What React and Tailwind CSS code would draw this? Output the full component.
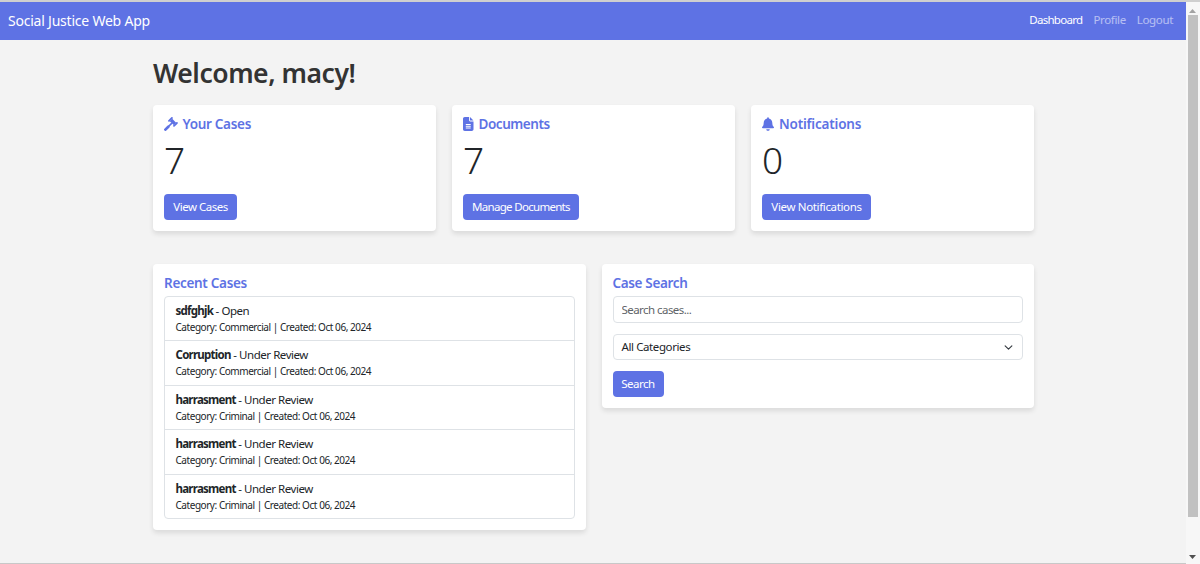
import React, { useState } from "react";
import { FaBell } from "react-icons/fa";
import { FaFileLines } from "react-icons/fa6";

// Solid gavel, head pointing to the upper right
function GavelIcon() {
  return (
    <svg
      className="w-[14px] h-[14px] mr-[4.5px]"
      viewBox="0 0 14 14"
      fill="none"
      stroke="currentColor"
      strokeLinecap="round"
    >
      <path d="M5 3.9L7.9 1M10 8.9L12.9 6" strokeWidth="1.8" />
      <path d="M5.8 4.2L8.2 1.8L12.1 5.7L9.7 8.1z" fill="currentColor" stroke="none" />
      <path d="M7.6 6.4L4.5 9.5" strokeWidth="1.6" />
      <path d="M4.3 9.7L1.4 12.6" strokeWidth="2.7" />
    </svg>
  );
}

const stats = [
  {
    title: "Your Cases",
    icon: <GavelIcon />,
    titleClass: "tracking-[-0.3px]",
    count: 7,
    action: "View Cases",
    buttonClass: "w-[73px] tracking-[-0.5px]",
  },
  {
    title: "Documents",
    icon: <FaFileLines className="w-[10.5px] h-[14px] mr-[5px]" />,
    titleClass: "tracking-[-0.45px]",
    count: 7,
    action: "Manage Documents",
    buttonClass: "w-[116px] tracking-[-0.7px]",
  },
  {
    title: "Notifications",
    icon: <FaBell className="w-[12px] h-[14px] mr-[5px]" />,
    titleClass: "tracking-[-0.2px]",
    count: 0,
    action: "View Notifications",
    buttonClass: "w-[109px] tracking-[-0.35px]",
  },
];

const recentCases = [
  { id: 1, title: "sdfghjk", status: "Open", category: "Commercial" },
  { id: 2, title: "Corruption", status: "Under Review", category: "Commercial" },
  { id: 3, title: "harrasment", status: "Under Review", category: "Criminal" },
  { id: 4, title: "harrasment", status: "Under Review", category: "Criminal" },
  { id: 5, title: "harrasment", status: "Under Review", category: "Criminal" },
];

function Navbar() {
  return (
    <nav className="h-[38px] shrink-0 bg-[#5e72e4] flex items-center justify-between pl-2 pr-[13px] pb-px text-white whitespace-nowrap">
      <a href="#" className="text-[14px] tracking-[-0.22px]">
        Social Justice Web App
      </a>
      <div className="flex gap-[11px] pb-px text-[11.5px] tracking-[-0.35px]">
        <a href="#" className="tracking-[-0.7px]">
          Dashboard
        </a>
        <a href="#" className="text-white/55">
          Profile
        </a>
        <a href="#" className="text-white/55">
          Logout
        </a>
      </div>
    </nav>
  );
}

function Card({ children, className }) {
  return (
    <div
      className={`bg-white rounded-[4px] shadow-[0_3px_5px_rgba(0,0,0,0.1)] px-[11px] ${className}`}
    >
      {children}
    </div>
  );
}

function CardTitle({ children, className }) {
  return (
    <h5
      className={`flex items-center h-[18px] text-[13.5px] font-semibold text-[#5e72e4] whitespace-nowrap ${className}`}
    >
      {children}
    </h5>
  );
}

function Button({ children, className }) {
  return (
    <button
      className={`h-[26px] rounded-[4px] bg-[#5e72e4] text-white text-[11.5px] whitespace-nowrap ${className}`}
    >
      {children}
    </button>
  );
}

// Page scrollbar on the right edge
function Scrollbar() {
  return (
    <div className="w-[14px] flex flex-col items-center bg-[#f7f7f7] pr-px">
      <svg className="w-[7px] h-[4px] mt-[7px] mb-[2px]" viewBox="0 0 7 4">
        <path d="M3.5 0L7 4H0z" fill="#a3a3a3" />
      </svg>
      <div className="w-[10px] h-[502px] bg-[#c1c1c1]" />
      <svg className="w-[7px] h-[4px] mt-auto mb-[5px]" viewBox="0 0 7 4">
        <path d="M0 0H7L3.5 4z" fill="#505050" />
      </svg>
    </div>
  );
}

function App() {
  const [search, setSearch] = useState("");

  return (
    <div className="h-[564px] flex flex-col overflow-hidden bg-[#f3f3f3] font-['Noto_Sans',sans-serif] text-[#212529]">
      <div className="h-[2px] shrink-0 bg-[#cfcfcf]" />
      <div className="flex flex-1 min-h-0">
        <div className="flex-1 flex flex-col border-b border-[#c8c8c8]">
          <Navbar />
          <main className="w-[881px] ml-[153px]">
            <h1 className="mt-[16px] h-[34px] leading-[34px] text-[26.5px] font-semibold tracking-[-0.45px] text-[#333]">
              Welcome, macy!
            </h1>

            {/* Stat cards */}
            <div className="grid grid-cols-3 gap-4 mt-[15px]">
              {stats.map((stat) => (
                <Card key={stat.title} className="h-[126px] pt-[10px]">
                  <CardTitle className={stat.titleClass}>
                    {stat.icon}
                    {stat.title}
                  </CardTitle>
                  <p className="mt-[4px] h-[46px] leading-[46px] text-[37px] font-light">
                    {stat.count}
                  </p>
                  <Button className={`mt-[11px] ${stat.buttonClass}`}>{stat.action}</Button>
                </Card>
              ))}
            </div>

            <div className="grid grid-cols-2 gap-4 items-start mt-[33px]">
              {/* Recent cases */}
              <Card className="h-[266px] pt-[10px]">
                <CardTitle className="tracking-[-0.3px]">Recent Cases</CardTitle>
                <ul className="mt-[4px] h-[223px] flex flex-col border border-[#dee2e6] rounded-[4px] divide-y divide-[#dee2e6]">
                  {recentCases.map((item) => (
                    <li key={item.id} className="flex-1 pl-[10.5px] pt-[5px] whitespace-nowrap">
                      <p className="h-[17px] leading-[18px] text-[11.5px] tracking-[-0.45px]">
                        <strong className="tracking-[-0.75px]">{item.title}</strong> - {item.status}
                      </p>
                      <p className="h-[16px] leading-[16px] text-[10px] tracking-[-0.45px]">
                        Category: {item.category} | Created: Oct 06, 2024
                      </p>
                    </li>
                  ))}
                </ul>
              </Card>

              {/* Case search */}
              <Card className="h-[144px] pt-[10px]">
                <CardTitle className="tracking-[-0.35px]">Case Search</CardTitle>
                <input
                  type="text"
                  placeholder="Search cases..."
                  value={search}
                  onChange={(e) => setSearch(e.target.value)}
                  className="block mt-[4px] w-full h-[27px] px-2 border border-[#dee2e6] rounded-[4px] text-[11.5px] tracking-[-0.55px] placeholder:text-[#5f6468]"
                />
                <button className="mt-[11px] w-full h-[26px] px-2 flex items-center justify-between border border-[#dee2e6] rounded-[4px] text-[11.5px] tracking-[-0.4px]">
                  All Categories
                  <svg className="w-[9px] h-[9px] mr-px" viewBox="0 0 16 16" fill="none">
                    <path
                      d="m2 5 6 6 6-6"
                      stroke="#343a40"
                      strokeWidth="2"
                      strokeLinecap="round"
                      strokeLinejoin="round"
                    />
                  </svg>
                </button>
                <Button className="mt-[11px] w-[51px] tracking-[-0.5px]">Search</Button>
              </Card>
            </div>
          </main>
        </div>
        <Scrollbar />
      </div>
    </div>
  );
}

export default App;
